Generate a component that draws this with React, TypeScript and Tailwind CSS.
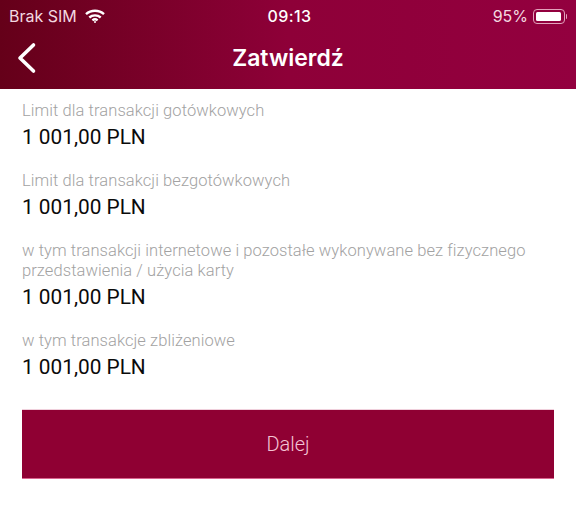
// App.tsx
import React from "react";

const font = { fontFamily: "Roboto, sans-serif" };

function Limit({ label, value }: { label: string; value: string }) {
  return (
    <div className="mb-[21px]">
      <div className="text-[16.5px] leading-[20px] text-[#a2a2a2] font-light tracking-[0.08px]">{label}</div>
      <div className="mt-[3px] text-[20.8px] leading-[26px] text-[#0a0a0a]">{value}</div>
    </div>
  );
}

export default function App() {
  return (
    <div className="w-[576px] h-[524px] bg-white overflow-hidden flex flex-col" style={font}>
      <header className="h-[89px] shrink-0 bg-gradient-to-r from-[#650019] via-[#8e0038] via-50% to-[#93003f] text-white">
        {/* Status bar */}
        <div className="h-[32px] grid grid-cols-3 items-center pl-[9px] pr-[9px] text-[16px]">
          <div className="flex items-center gap-[8px] text-[#f3d9e0]">
            <span style={{ fontFamily: "Inter, sans-serif" }} className="text-[16px]">Brak SIM</span>
            <svg width="20" height="15" viewBox="0 0 20 15" fill="none" stroke="white" strokeWidth="2.4">
              <path d="M1 5.2C6 .6 14 .6 19 5.2" />
              <path d="M4.3 8.5c3.2-2.9 8.2-2.9 11.4 0" />
              <path d="M7.4 11.4c1.5-1.2 3.7-1.2 5.2 0" />
              <circle cx="10" cy="13" r="1" fill="white" stroke="none" />
            </svg>
          </div>
          <div className="text-center font-medium tracking-[0.4px] pl-[3px]" style={{ fontFamily: "Inter, sans-serif" }}>09:13</div>
          <div className="flex items-center justify-end gap-[5px] text-[#f3d9e0]">
            <span style={{ fontFamily: "Inter, sans-serif" }} className="text-[16px]">95%</span>
            <div className="flex items-center">
              <div className="w-[32px] h-[15px] rounded-[4px] border border-[#e2a3bb] p-[2px]">
                <div className="h-full w-[25px] bg-white rounded-[1.5px]"></div>
              </div>
              <div className="w-[1.5px] h-[5px] bg-[#e2a3bb] rounded-r ml-[0.5px]"></div>
            </div>
          </div>
        </div>

        {/* Title row */}
        <div className="relative h-[57px] flex items-center justify-center">
          <svg className="absolute left-[17px] top-[10px]" width="20" height="32" viewBox="0 0 20 32" fill="none" stroke="white" strokeWidth="3.6" strokeLinecap="round" strokeLinejoin="round">
            <path d="M16.5 3 3 16l13.500 13" />
          </svg>
          <h1 className="text-[23px] font-semibold mt-[-4px]" style={{ fontFamily: "Inter, sans-serif" }}>Zatwierdź</h1>
        </div>
      </header>

      <main className="flex-1 px-[22px] pt-[12px]">
        <Limit label="Limit dla transakcji gotówkowych" value="1 001,00 PLN" />
        <Limit label="Limit dla transakcji bezgotówkowych" value="1 001,00 PLN" />
        <Limit
          label="w tym transakcji internetowe i pozostałe wykonywane bez fizycznego przedstawienia / użycia karty"
          value="1 001,00 PLN"
        />
        <Limit label="w tym transakcje zbliżeniowe" value="1 001,00 PLN" />

        <button className="mt-[8px] w-[532px] h-[70px] bg-[#8f0033] border-t border-b border-t-[#f0d0dc] border-b-[#d9648f] text-[20px] font-light text-[#f4c4d5]">
          Dalej
        </button>
      </main>
    </div>
  );
}
